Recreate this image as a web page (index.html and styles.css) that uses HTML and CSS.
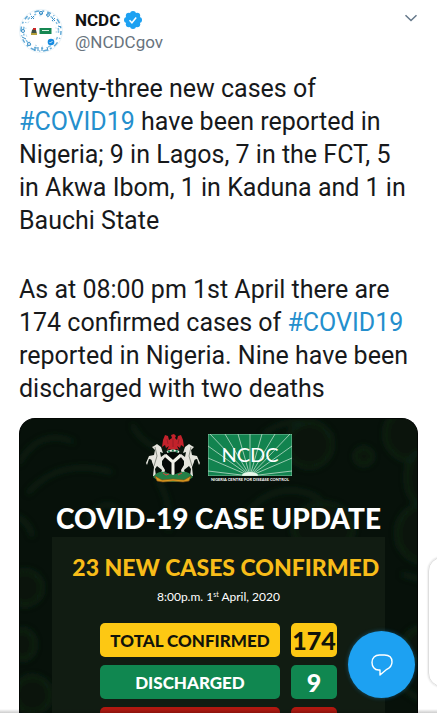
FILE: index.html
```html
<!DOCTYPE html>
<html lang="en">
<head>
<meta charset="utf-8">
<meta name="viewport" content="width=device-width, initial-scale=1">
<title>NCDC update</title>
<link rel="stylesheet" href="styles.css">
</head>
<body>
<div class="app">
<main class="feed">
  <article class="tweet">
    <header class="author">
      <svg class="avatar" viewBox="0 0 44 44" role="img" aria-label="NCDC avatar">
        <circle cx="22" cy="22" r="21.5" fill="#fff" stroke="#dcebf3" stroke-width=".6"/>
        <circle cx="22" cy="22" r="20" fill="none" stroke="#62a9d6" stroke-width="1.500" stroke-dasharray="4 3 1 4 5 3 2 3"/>
        <circle cx="22" cy="22" r="17.5" fill="none" stroke="#83bee1" stroke-width="1.500" stroke-dasharray="2 4 3 4 1 3 3 5"/>
        <circle cx="22" cy="22" r="15.3" fill="none" stroke="#b5d8ec" stroke-width="1" stroke-dasharray="2 6 1 5"/>
        <g fill="none" stroke="#3a8fc7" stroke-width="1">
          <circle cx="22" cy="4" r="1.6"/><circle cx="29" cy="6" r="1.4"/><circle cx="10" cy="35" r="1.5"/><circle cx="4" cy="22" r="1.5"/>
          <path d="M12 7l3 3m0-3l-3 3M33 9l3 3m0-3l-3 3M16 38v4m3-4v4m4-4v4m5-4l1 4M39 17l3 1M3 28l4 2"/>
        </g>
        <path d="M12 25l1-4 2-2 2 2 1 4z" fill="#3d5044"/><path d="M14 19h3v2h-3z" fill="#c92525"/><path d="M12 24h6v2h-6z" fill="#b6a13b"/>
        <path d="M20.500 19h12v6h-12z" fill="#158752"/><path d="M23 21.500h7" stroke="#d9efe2"/>
        <circle cx="32" cy="33" r="3.300" fill="#168be2"/><path d="M30.500 33l1 1 2-2" fill="none" stroke="#fff" stroke-width=".8"/>
      </svg>
      <div class="names">
        <div class="name">NCDC
          <svg class="verified" viewBox="0 0 18 18" role="img" aria-label="Verified account">
            <g fill="#1da1f2"><circle cx="9" cy="9" r="7"/><circle cx="9" cy="3" r="3"/><circle cx="13.200" cy="4.800" r="3"/><circle cx="15" cy="9" r="3"/><circle cx="13.200" cy="13.200" r="3"/><circle cx="9" cy="15" r="3"/><circle cx="4.800" cy="13.200" r="3"/><circle cx="3" cy="9" r="3"/><circle cx="4.800" cy="4.800" r="3"/></g>
            <path d="M5.500 9.300l2.400 2.500 4.300-5.300" fill="none" stroke="#fff" stroke-width="1.500"/>
          </svg>
        </div>
        <div class="handle">@NCDCgov</div>
      </div>
      <button class="more" aria-label="More options"><svg viewBox="0 0 14 8"><path d="M1.500 1.200L7 6.500l5.500-5.300" fill="none" stroke="#65788a" stroke-width="1.500"/></svg></button>
    </header>
    <div class="message">
      <p>Twenty-three new cases of <a href="#covid19">#COVID19</a> have been reported in Nigeria; 9 in Lagos, 7 in the FCT, 5 in Akwa Ibom, 1 in Kaduna and 1 in Bauchi State</p>
      <p>As at 08:00 pm 1st April there are 174 confirmed cases of <a href="#covid19">#COVID19</a> reported in Nigeria. Nine have been discharged with two deaths</p>
    </div>
    <section class="media">
      <svg class="cells" viewBox="0 0 398 320" preserveAspectRatio="xMidYMin slice" aria-hidden="true">
        <defs><filter id="soft"><feGaussianBlur stdDeviation="3"/></filter></defs>
        <g filter="url(#soft)" fill="#09160c" stroke="#16301b" stroke-width="3" opacity=".7">
          <path d="M118 5q14 28 50 25M152 105q3-29-10-48M20 70q30-35 80-20M215 100q35-50 80-25M240 15q30-24 65 0" fill="none"/>
          <circle cx="284" cy="24" r="21"/><circle cx="335" cy="35" r="8"/><circle cx="380" cy="14" r="25"/><ellipse cx="297" cy="102" rx="28" ry="23"/><ellipse cx="391" cy="107" rx="25" ry="27"/><ellipse cx="388" cy="55" rx="13" ry="24"/>
          <path d="M12 42q20-35 52-20M76 95q18-28 34-4M0 90q20 0 25 20" fill="none"/>
          <circle cx="18" cy="158" r="16"/><ellipse cx="16" cy="211" rx="11" ry="14"/><circle cx="25" cy="258" r="17"/><circle cx="388" cy="211" r="15"/><path d="M370 145l29 8M368 250l31 20"/>
        </g>
      </svg>
      <div class="poster">
        <div class="logos">
          <svg class="arms" viewBox="0 0 56 50" role="img" aria-label="Coat of arms of Nigeria">
            <path d="M27 4l-1-3 3-1 2 2-1 2 2 2 1-4 3-1 2 5 1 7-3-2-1 3-3-2 2 4-3-1-3 2-3-2-3 1 2-4-3 2-1-3-3 2 1-7 2-5 3 1 1 4z" fill="#c3222b"/>
            <path d="M22 5l1 5m11-5l-1 5M28 5v8" stroke="#841b24" stroke-width=".7"/>
            <path d="M22 18q6-3 12 0" fill="none" stroke="#edf0e7" stroke-width="2"/><path d="M23 18q5-3 10 0" fill="none" stroke="#188253" stroke-width="2" stroke-dasharray="2 2"/>
            <path d="M18 20q10-3 20 0v12q-2 7-10 11-8-4-10-11z" fill="#050806"/><path d="M20 21l8 7v15M36 21l-8 7" fill="none" stroke="#f2f2e9" stroke-width="3"/>
            <path d="M9 12l3-2 4 3 2 6-3-1 1 5 4-3 1 2-4 5v4l3 5-1 4-3-1 1-3-5-4-2 3 1 7H8l1-9-2-5q0-3-3-3l-2 6-1-2 3-7 5-1 1-5-3-3z" fill="#e5e5dd"/>
            <path d="M47 12l-3-2-4 3-2 6 3-1-1 5-4-3-1 2 4 5v4l-3 5 1 4 3-1-1-3 5-4 2 3-1 7h3l-1-9 2-5q0-3 3-3l2 6 1-2-3-7-5-1-1-5 3-3z" fill="#e5e5dd"/>
            <path d="M10 13l2 9-3 10M46 13l-2 9 3 10" fill="none" stroke="#888d83" stroke-width="1"/>
            <path d="M8 43q4-6 12-5l8 3 8-3q8-1 12 5-4 5-20 5T8 43z" fill="#248047"/>
            <path d="M10 42l7 4 11-1 11 1 7-4-2 5-6 1-10-1-10 1-6-1z" fill="#d99a20" stroke="#854e13" stroke-width=".6"/>
            <path d="M18 39l3 2 3-1m9 1l4-2" fill="none" stroke="#e1403f" stroke-width="1"/>
          </svg>
          <div class="agency">
            <svg viewBox="0 0 84 42" role="img" aria-label="NCDC">
              <path d="M0 0h84v42H0z" fill="#12834f"/>
              <path d="M42 42L0 37M42 42L0 24M42 42L0 12M42 42L2 0M42 42L17 0M42 42L30 0M42 42V0M42 42L54 0M42 42L67 0M42 42L82 0M42 42l42-30M42 42l42-18M42 42l42-5" stroke="#a9d3bb" stroke-width=".9"/>
              <ellipse cx="42" cy="41" rx="8" ry="3" fill="#e6f7e9"/>
              <text class="logo-text" x="42" y="28" text-anchor="middle">NCDC</text><path d="M0 0h84v42H0z" fill="none" stroke="#b5dac4" stroke-width=".7"/>
            </svg>
            <span>NIGERIA CENTRE FOR DISEASE CONTROL</span>
          </div>
        </div>
        <h1>COVID-19 CASE UPDATE</h1>
        <div class="panel">
          <h2>23 NEW CASES CONFIRMED</h2>
          <time>8:00p.m. 1<sup>st</sup> April, 2020</time>
          <dl class="counts">
            <dt class="confirmed">TOTAL CONFIRMED</dt><dd class="confirmed">174</dd>
            <dt class="discharged">DISCHARGED</dt><dd class="discharged">9</dd>
            <dt class="deaths"></dt><dd class="deaths"></dd>
          </dl>
        </div>
      </div>
    </section>
  </article>
  <div class="next-card"></div>
  <button class="reply" aria-label="Reply"><svg viewBox="0 0 24 24"><path d="M9.500 2h5c5 0 7.500 3 7.500 7 0 3.500-2 5.800-5.200 7.300L10 22v-5H8.500C4.500 17 2 13.500 2 9.500 2 5 5 2 9.500 2z" fill="none" stroke="#fff" stroke-width="1.400" stroke-linejoin="round"/></svg></button>
</main>
<footer class="bottom"></footer>
</div>
</body>
</html>
```

FILE: styles.css
```css
* { box-sizing: border-box; }
body { margin: 0; background: #fff; color: #17191b; font-family: Roboto, sans-serif; }
button { border: 0; padding: 0; background: none; }
svg { display: block; }
h1, h2, p, dl, dd { margin: 0; }
.app { height: 100vh; display: flex; flex-direction: column; }
.feed { position: relative; flex: 1; min-height: 0; overflow: hidden; }
.feed::after { content: ""; position: absolute; left: 0; right: 0; bottom: 0; height: 4px; background: linear-gradient(transparent, #0003); }
.bottom { height: 7px; background: #fff; }
.tweet { padding: 9px 19px 0; }
.author { display: flex; align-items: flex-start; gap: 12px; }
.avatar { width: 44px; height: 44px; }
.names { flex: 1; }
.name { display: flex; align-items: center; gap: 4px; font-size: 17px; line-height: 22px; font-weight: 700; color: #111; }
.verified { width: 18px; height: 18px; }
.handle { color: #68737d; font-size: 17px; line-height: 22px; }
.more { padding: 5px 0; }
.more svg { width: 14px; height: 8px; }
.message { padding: 19px 3px 0 0; font-size: 25px; line-height: 33px; }
.message p + p { margin-top: 36px; }
.message a { color: #248fcd; text-decoration: none; }
.media { position: relative; margin-top: 13px; border-radius: 16px 16px 0 0; overflow: hidden; background: #07110a; border: 1px solid #030604; border-bottom: 0; color: #fff; font-family: Lato, sans-serif; }
.cells { position: absolute; inset: 0; width: 100%; height: 100%; }
.poster { position: relative; display: flex; flex-direction: column; align-items: center; padding-top: 15px; }
.logos { display: flex; gap: 7px; }
.arms { width: 56px; height: 50px; }
.agency { width: 84px; text-align: center; white-space: nowrap; }
.agency > svg { width: 84px; height: 42px; }
.agency > span { display: flex; justify-content: center; font-size: 4px; line-height: 8px; font-weight: 700; }
.logo-text { fill: #fff; font: 400 20px Lato, sans-serif; }
h1 { margin-top: 17px; font-size: 28px; line-height: 34px; font-weight: 900; white-space: nowrap; }
.panel { width: 84%; margin-top: 2px; padding: 15px 0 20px; background: #111c12; display: flex; flex-direction: column; align-items: center; }
h2 { align-self: flex-end; padding-right: 6px; color: #f8bd19; font-size: 23px; line-height: 30px; font-weight: 900; white-space: nowrap; }
time { margin-top: 6px; font-size: 12px; line-height: 18px; }
sup { font-size: 7px; line-height: 0; vertical-align: 4px; }
.counts { display: grid; grid-template-columns: 180px 46px; grid-auto-rows: 34px; gap: 8px 11px; margin-top: 17px; font-weight: 900; }
.counts > * { display: flex; align-items: center; justify-content: center; border-radius: 5px; }
.counts dt { font-size: 17px; }
.counts dd { font-size: 25px; }
.confirmed { background: #fdc813; color: #12140a; }
.discharged { background: #108750; }
.deaths { background: #b01810; }
.next-card { position: absolute; left: calc(100% - 9px); bottom: 26px; width: 40px; height: 130px; border: 1px solid #dedede; border-radius: 14px; box-shadow: 0 0 2px #ccc; }
.reply { position: absolute; right: 22px; bottom: 15px; display: grid; place-items: center; width: 67px; height: 67px; border-radius: 50%; background: #1da1f2; box-shadow: 0 0 4px #1da1f266; }
.reply svg { width: 24px; height: 24px; }
```
